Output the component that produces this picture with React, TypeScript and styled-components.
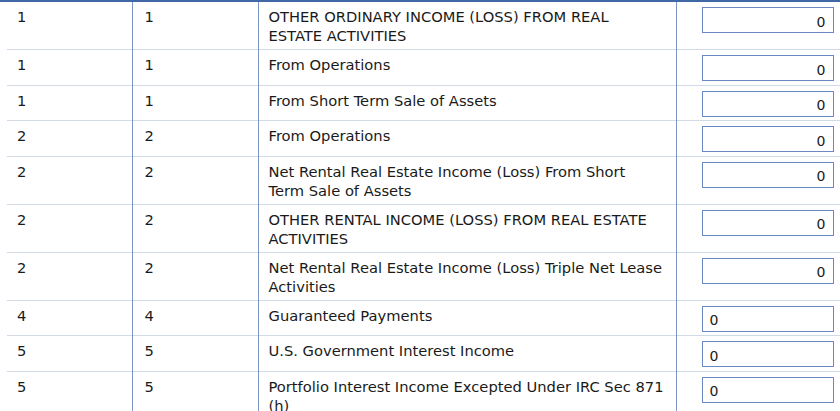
import styled, { createGlobalStyle } from 'styled-components';

const GlobalStyle = createGlobalStyle`
  body {
    margin: 0;
    background: #ffffff;
    font-family: "DejaVu Sans", Verdana, sans-serif;
    color: #1a1a1a;
  }
`;

const Wrapper = styled.div`
  border-top: 2px solid #4168a6;
  overflow: hidden;
`;

const Table = styled.table`
  margin-left: 7px;
  width: 833px;
  border-collapse: collapse;
  table-layout: fixed;
`;

const Row = styled.tr`
  & + & td {
    border-top: 1px solid #d2dae6;
  }
`;

const Cell = styled.td<{ $w: number }>`
  box-sizing: border-box;
  width: ${(p) => p.$w}px;
  padding: 5px 10px 4px 10px;
  vertical-align: top;
  font-size: 14.7px;
  line-height: 19px;
  border-right: 1px solid #7a95c3;
  &:nth-child(2) {
    padding-left: 12px;
  }
  &:nth-child(3) {
    padding-right: 10.5px;
  }
  &:last-child {
    border-right: none;
    padding: 5px 0 3.5px 25px;
  }
`;

const Amount = styled.input<{ $align: 'left' | 'right' }>`
  display: block;
  box-sizing: border-box;
  width: 132px;
  height: 26px;
  margin: 0;
  border: 1px solid #6a89c3;
  border-radius: 0;
  padding: ${(p) => (p.$align === 'right' ? '3px 7px 0 4px' : '3px 4px 0 7px')};
  text-align: ${(p) => p.$align};
  font-family: "DejaVu Sans", Verdana, sans-serif;
  font-size: 14px;
  color: #1a1a1a;
  background: #fff;
  outline: none;
`;

const rows: { a: string; b: string; label: string; align: 'left' | 'right' }[] = [
  { a: '1', b: '1', label: 'OTHER ORDINARY INCOME (LOSS) FROM REAL ESTATE ACTIVITIES', align: 'right' },
  { a: '1', b: '1', label: 'From Operations', align: 'right' },
  { a: '1', b: '1', label: 'From Short Term Sale of Assets', align: 'right' },
  { a: '2', b: '2', label: 'From Operations', align: 'right' },
  { a: '2', b: '2', label: 'Net Rental Real Estate Income (Loss) From Short Term Sale of Assets', align: 'right' },
  { a: '2', b: '2', label: 'OTHER RENTAL INCOME (LOSS) FROM REAL ESTATE ACTIVITIES', align: 'right' },
  { a: '2', b: '2', label: 'Net Rental Real Estate Income (Loss) Triple Net Lease Activities', align: 'right' },
  { a: '4', b: '4', label: 'Guaranteed Payments', align: 'left' },
  { a: '5', b: '5', label: 'U.S. Government Interest Income', align: 'left' },
  { a: '5', b: '5', label: 'Portfolio Interest Income Excepted Under IRC Sec 871 (h)', align: 'left' },
];

export default function App() {
  return (
    <>
      <GlobalStyle />
      <Wrapper>
        <Table>
          <tbody>
            {rows.map((r, i) => (
              <Row key={`row-${i}`}>
                <Cell $w={125}>{r.a}</Cell>
                <Cell $w={126}>{r.b}</Cell>
                <Cell $w={418}>{r.label}</Cell>
                <Cell $w={164}>
                  <Amount $align={r.align} defaultValue="0" />
                </Cell>
              </Row>
            ))}
          </tbody>
        </Table>
      </Wrapper>
    </>
  );
}
